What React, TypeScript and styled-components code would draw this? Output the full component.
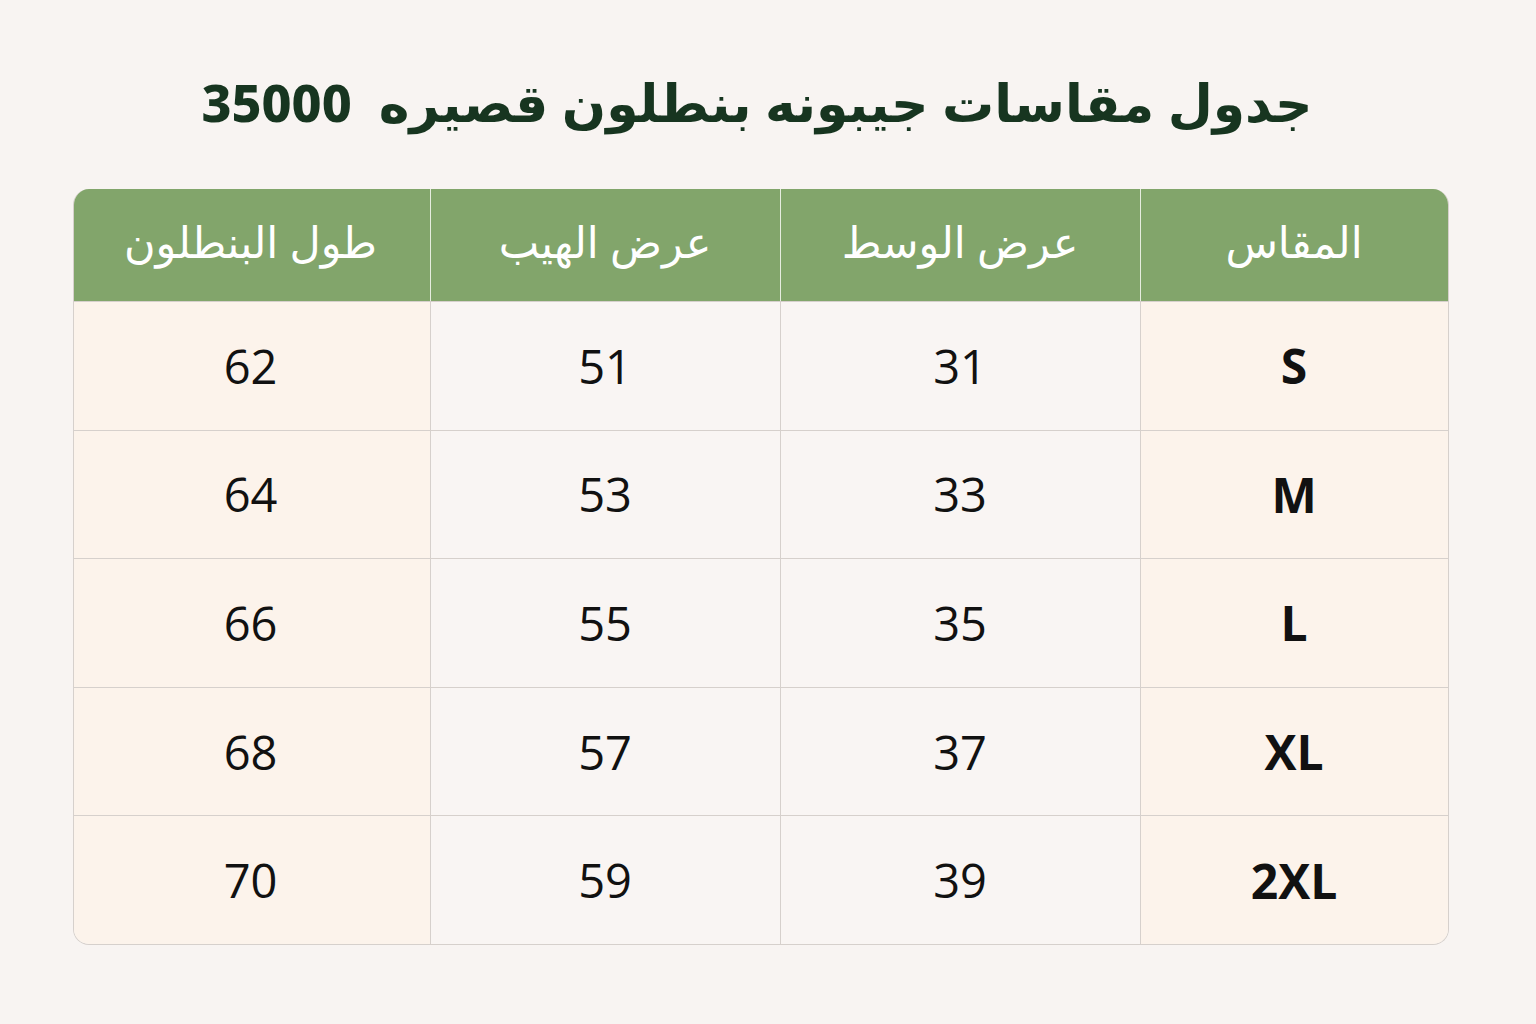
import React from "react";
import styled, { createGlobalStyle } from "styled-components";

const Global = createGlobalStyle`
  html, body {
    margin: 0;
    padding: 0;
    background: #f8f4f2;
  }
  body {
    font-family: "Open Sans", "Noto Sans", "DejaVu Sans", sans-serif;
  }
`;

const Page = styled.div`
  width: 1536px;
  height: 1024px;
  box-sizing: border-box;
  padding-top: 62px;
  display: flex;
  flex-direction: column;
  align-items: center;
  direction: rtl;
`;

const Title = styled.h1`
  margin: 0 22px 0 0;
  height: 80px;
  line-height: 80px;
  font-size: 52px;
  font-weight: 800;
  color: #173520;
  white-space: pre;
  font-family: "Noto Sans", "DejaVu Sans", sans-serif;
`;

const Table = styled.div`
  margin-top: 47px;
  margin-right: 15px;
  width: 1376px;
  display: grid;
  grid-template-columns: 308px 360px 350px 358px;
  grid-template-rows: 112px repeat(5, 128.6px);
  border: 1px solid #d6d0cc;
  border-top: none;
  border-radius: 16px;
  overflow: hidden;
  box-sizing: border-box;
`;

const HeadCell = styled.div<{ $last?: boolean }>`
  background: #82a56b;
  color: #ffffff;
  display: flex;
  align-items: center;
  justify-content: center;
  font-size: 43px;
  font-weight: 500;
  font-family: "Noto Sans", "DejaVu Sans", sans-serif;
  border-left: ${(p) => (p.$last ? "none" : "1px solid #e6ecdf")};
  padding-bottom: 8px;
  box-sizing: border-box;
`;

const Cell = styled.div<{ $tint?: boolean; $last?: boolean; $bold?: boolean }>`
  background: ${(p) => (p.$tint ? "#fcf3eb" : "#f9f5f3")};
  color: #111111;
  display: flex;
  align-items: center;
  justify-content: center;
  font-size: ${(p) => (p.$bold ? "48px" : "47px")};
  font-weight: ${(p) => (p.$bold ? 700 : 400)};
  font-family: "Open Sans", "Noto Sans", sans-serif;
  border-left: ${(p) => (p.$last ? "none" : "1px solid #d6d0cc")};
  border-top: 1px solid #d6d0cc;
  box-sizing: border-box;
`;

const headers = ["المقاس", "عرض الوسط", "عرض الهيب", "طول البنطلون"];
const rows = [
  ["S", "31", "51", "62"],
  ["M", "33", "53", "64"],
  ["L", "35", "55", "66"],
  ["XL", "37", "57", "68"],
  ["2XL", "39", "59", "70"],
];

export default function App() {
  return (
    <>
      <Global />
      <Page>
        <Title>{"جدول مقاسات جيبونه بنطلون قصيره  35000"}</Title>
        <Table>
          {headers.map((h, i) => (
            <HeadCell key={h} $last={i === headers.length - 1}>
              {h}
            </HeadCell>
          ))}
          {rows.map((r, ri) =>
            r.map((v, ci) => (
              <Cell
                key={`${ri}-${ci}`}
                $tint={ci === 0 || ci === 3}
                $last={ci === 3}
                $bold={ci === 0}
              >
                {v}
              </Cell>
            ))
          )}
        </Table>
      </Page>
    </>
  );
}
